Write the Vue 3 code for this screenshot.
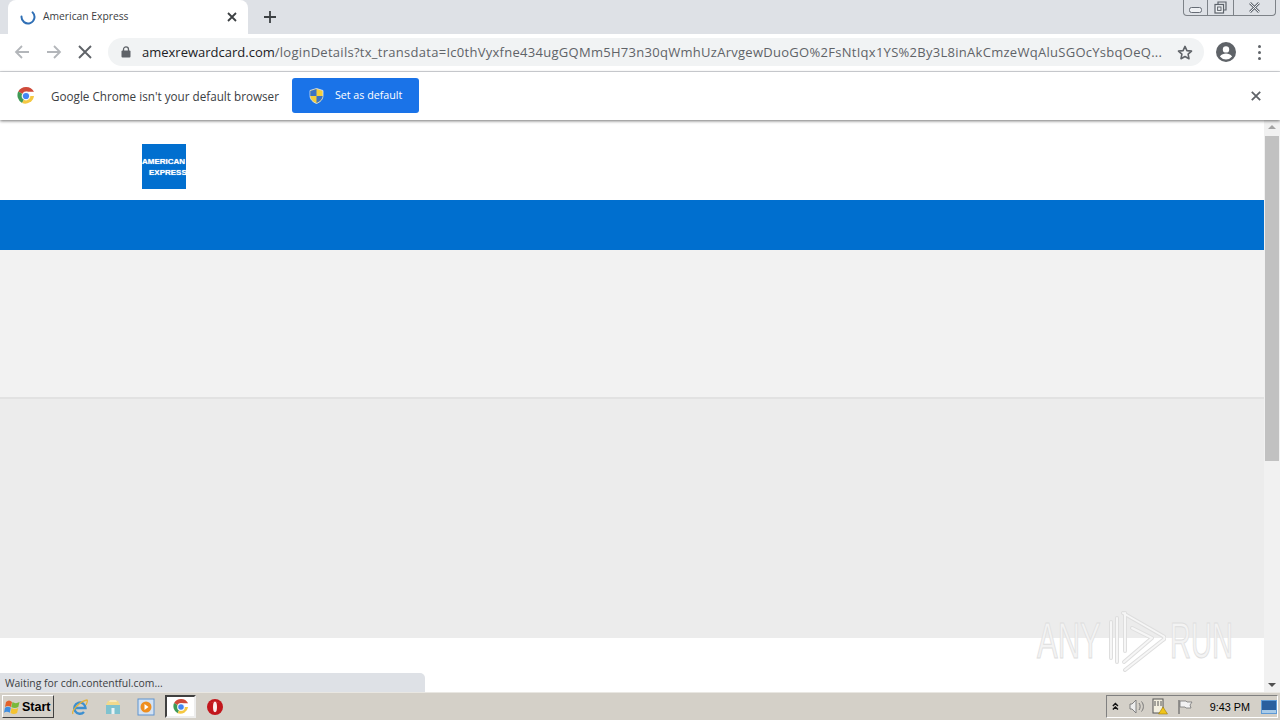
<script setup>
const url = 'amexrewardcard.com'
const path = '/loginDetails?tx_transdata=Ic0thVyxfne434ugGQMm5H73n30qWmhUzArvgewDuoGO%2FsNtIqx1YS%2By3L8inAkCmzeWqAluSGOcYsbqOeQ...'
</script>

<template>
  <div class="screen">
    <header class="tabstrip">
      <div class="tab">
        <svg class="spinner" width="16" height="16" viewBox="0 0 16 16"><path d="M12.600 3.400A6.500 6.500 0 1 1 1.500 7.500" fill="none" stroke="#2f6fb5" stroke-width="2" stroke-linecap="round"/></svg>
        <span class="tab-title">American Express</span>
        <svg class="tab-close" width="10" height="10" viewBox="0 0 10 10"><path d="M1 1l8 8M9 1l-8 8" stroke="#3c4043" stroke-width="1.800"/></svg>
      </div>
      <svg class="new-tab" width="12" height="12" viewBox="0 0 12 12"><path d="M6 0v12M0 6h12" stroke="#3c4043" stroke-width="1.800"/></svg>
      <div class="win-controls">
        <div class="win-btn min"><svg width="13" height="6" viewBox="0 0 13 6"><rect x=".5" y=".5" width="12" height="5" rx="2" fill="#eef0f3" stroke="#666c75"/></svg></div>
        <div class="win-btn mid"><svg width="13" height="13" viewBox="0 0 13 13"><path d="M4 3V1h8v8h-2" fill="none" stroke="#5d636b" stroke-width="1.200"/><rect x="1" y="3.500" width="8.500" height="8.500" fill="#eef0f3" stroke="#5d636b" stroke-width="1.200"/><rect x="3.600" y="6" width="3.400" height="3.400" fill="none" stroke="#5d636b"/></svg></div>
        <div class="win-btn close"><svg width="13" height="11" viewBox="0 0 13 11"><path d="M2 1l9 9M11 1l-9 9" stroke="#666c75" stroke-width="2.600"/><path d="M2 1l9 9M11 1l-9 9" stroke="#eef0f3" stroke-width="1"/></svg></div>
      </div>
    </header>

    <nav class="toolbar">
      <svg class="nav-icon first" width="16" height="16" viewBox="0 0 16 16"><path d="M15 8H2M8 2L2 8l6 6" fill="none" stroke="#b3b6ba" stroke-width="1.800"/></svg>
      <svg class="nav-icon" width="16" height="16" viewBox="0 0 16 16"><path d="M1 8h13M8 2l6 6-6 6" fill="none" stroke="#b3b6ba" stroke-width="1.800"/></svg>
      <svg class="nav-icon" width="14" height="14" viewBox="0 0 14 14"><path d="M1 1l12 12M13 1L1 13" stroke="#5f6368" stroke-width="1.900"/></svg>
      <div class="omnibox">
        <svg class="lock" width="10" height="12" viewBox="0 0 10 12"><path d="M2.500 5V3.400a2.500 2.500 0 0 1 5 0V5" fill="none" stroke="#5f6368" stroke-width="1.300"/><rect x="0.500" y="4.600" width="9" height="7" rx="1" fill="#5f6368"/></svg>
        <span class="url"><b class="domain">{{ url }}</b>{{ path }}</span>
        <svg class="star" width="16" height="15" viewBox="0 0 16 15"><path d="M8 1.400l1.900 4.200 4.600.5-3.400 3.100.9 4.500L8 11.500l-4 2.200.9-4.500L1.500 6.100l4.600-.5z" fill="none" stroke="#5f6368" stroke-width="1.600" stroke-linejoin="round"/></svg>
      </div>
      <svg class="avatar" width="20" height="20" viewBox="0 0 20 20"><circle cx="10" cy="10" r="10" fill="#5f6368"/><circle cx="10" cy="7.400" r="3.200" fill="#fff"/><path d="M3.900 14.600c1.400-2.200 3.900-3 6.100-3s4.700.8 6.100 3a7.800 7.800 0 0 1-12.200 0z" fill="#fff"/></svg>
      <div class="kebab"><i></i><i></i><i></i></div>
    </nav>

    <aside class="infobar">
      <svg class="chrome-logo" width="18" height="18" viewBox="0 0 18 18">
        <path d="M9 9L1.200 4.600A9 9 0 0 1 17 4.800H9z" fill="#cf4a3a"/>
        <path d="M9 9l-3.900 7.100A9 9 0 0 1 1.200 4.600z" fill="#3f9a55"/>
        <path d="M9 9h8a9 9 0 0 1-11.900 7.100z" fill="#f5c842"/>
        <circle cx="9" cy="9" r="4.400" fill="#f4f6f8"/><circle cx="9" cy="9" r="3.100" fill="#4285f4"/>
      </svg>
      <span class="info-text">Google Chrome isn't your default browser</span>
      <button class="default-btn">
        <svg width="15" height="16" viewBox="0 0 15 16"><path d="M7.500.5l6.500 2v5c0 4-3 6.700-6.500 8C4 14.200 1 11.500 1 7.500v-5z" fill="#f4cf3c" stroke="#dfe6f2" stroke-width=".8"/><path d="M7.500 1v7H1.300V3zM7.500 8h6.200c-.3 3.300-3 5.700-6.200 7z" fill="#3b73c4"/></svg>
        <span>Set as default</span>
      </button>
      <svg class="info-close" width="10" height="10" viewBox="0 0 10 10"><path d="M.8.800l8.400 8.400M9.200.800L.8 9.200" stroke="#5f6368" stroke-width="1.800"/></svg>
    </aside>

    <main class="viewport">
      <div class="page">
        <div class="site-head">
          <div class="amex-logo"><span class="l1">AMERICAN</span><span class="l2">EXPRESS</span></div>
        </div>
        <div class="blue-band"></div>
        <div class="grey-one"></div>
        <div class="grey-two"></div>
        <div class="foot"></div>
      </div>
      <div class="scrollbar">
        <svg class="arrow-up" width="16" height="15" viewBox="0 0 16 15"><path d="M4 9l4-4 4 4z" fill="#a3a3a3"/></svg>
        <div class="track"><div class="thumb"></div></div>
        <svg width="16" height="15" viewBox="0 0 16 15"><path d="M4 6l4 4 4-4z" fill="#505050"/></svg>
      </div>
      <div class="status-bubble">Waiting for cdn.contentful.com...</div>
      <div class="watermark">
        <span class="wm-any">ANY</span>
        <svg class="wm-play" width="58" height="66" viewBox="0 0 58 66">
          <g fill="none" stroke-linejoin="round" stroke-linecap="round" stroke="#dedede" stroke-width="4">
            <path d="M3 14v36M9 10v44"/><path d="M15 5l40 23c2 1 2 3 0 4L17 62"/><path d="M17 5v38"/><path d="M24 20l20 10-28 24"/>
          </g>
          <g fill="none" stroke-linejoin="round" stroke-linecap="round" stroke="#f6f6f6" stroke-width="2">
            <path d="M3 14v36M9 10v44"/><path d="M15 5l40 23c2 1 2 3 0 4L17 62"/><path d="M17 5v38"/><path d="M24 20l20 10-28 24"/>
          </g>
        </svg>
        <span class="wm-run">RUN</span>
      </div>
    </main>

    <footer class="taskbar">
      <button class="start">
        <svg width="17" height="16" viewBox="0 0 17 16"><path d="M2 3c2-2 4-2 6 0l-1 5C5 6.500 3 6.500 1 8z" fill="#e2622b"/><path d="M8.500 3c2 1.500 4.500 1.500 7 0l-1.200 5c-2.300 1.300-4.800 1.300-7 0z" fill="#79b93a"/><path d="M1 8.800c2-1.500 4-1.500 5.800 0l-1 5c-2-1.500-4-1.500-5.800 0z" fill="#3f8ee0"/><path d="M7.500 9c2.200 1.300 4.500 1.300 6.700 0l-1.100 5c-2.200 1.300-4.600 1.300-6.600 0z" fill="#f4c330"/></svg>
        <span>Start</span>
      </button>
      <div class="quick">
        <svg width="18" height="18" viewBox="0 0 18 18"><path d="M4 10h10.500A5.600 5.600 0 1 0 13 14" fill="none" stroke="#3c8fd0" stroke-width="2.400"/><path d="M2 16C0 13 9 3 16 2c1 1 0 3-1 5" fill="none" stroke="#e3b23c" stroke-width="1.300"/></svg>
        <svg width="18" height="18" viewBox="0 0 18 18"><path d="M2 7h14v9H2z" fill="#7fc2cf"/><path d="M2 7l2-4h10l2 4z" fill="#f1d98c"/><path d="M5 4l1-2h6l1 2z" fill="#f7e9bd"/><rect x="7.500" y="10" width="3" height="6" fill="#e9f3f5"/></svg>
        <svg width="18" height="18" viewBox="0 0 18 18"><rect x="1" y="1" width="16" height="16" fill="#d3e2f3" stroke="#5f93cf"/><circle cx="9" cy="9" r="5.500" fill="#ee8e1f"/><path d="M7.500 6l4 3-4 3z" fill="#fff"/></svg>
      </div>
      <div class="task-active">
        <svg width="16" height="16" viewBox="0 0 18 18">
          <path d="M9 9L1.200 4.600A9 9 0 0 1 17 4.800H9z" fill="#cf4a3a"/>
          <path d="M9 9l-3.900 7.100A9 9 0 0 1 1.200 4.600z" fill="#3f9a55"/>
          <path d="M9 9h8a9 9 0 0 1-11.900 7.100z" fill="#f5c842"/>
          <circle cx="9" cy="9" r="4.400" fill="#f4f6f8"/><circle cx="9" cy="9" r="3.100" fill="#4285f4"/>
        </svg>
      </div>
      <svg class="opera" width="16" height="16" viewBox="0 0 16 16"><circle cx="8" cy="8" r="8" fill="#c2161c"/><path d="M3 4.500A8 8 0 0 1 13 4.500c-2-2-8-2-10 0z" fill="#e2676a"/><ellipse cx="8" cy="8" rx="2" ry="5.200" fill="#fbeeee"/></svg>
      <div class="tray">
        <svg width="8" height="9" viewBox="0 0 8 9"><path d="M1 4l3-3 3 3M1 8l3-3 3 3" fill="none" stroke="#111" stroke-width="1.700"/></svg>
        <svg class="t-sound" width="16" height="15" viewBox="0 0 16 15"><path d="M1 5h2l4-4v13l-4-4H1z" fill="#ededed" stroke="#777" stroke-width=".9"/><path d="M10 4c1.500 2 1.500 5 0 7M12.500 2.500c2.500 3 2.500 7 0 10" fill="none" stroke="#777"/></svg>
        <svg class="t-net" width="17" height="17" viewBox="0 0 17 17"><rect x="1" y="1" width="10" height="14" fill="#f3efdf" stroke="#555"/><path d="M3 3v5M6 3v5M9 3v5" stroke="#555"/><path d="M11 9l4.500 7h-9z" fill="#f0c419" stroke="#9b7a0a" stroke-width=".6"/></svg>
        <svg class="t-flag" width="16" height="16" viewBox="0 0 16 16"><path d="M2 1v14" stroke="#666" stroke-width="1.200"/><path d="M3 2h6l1 1h5l-2 3 1 3H9L8 8H3z" fill="#f2f2f2" stroke="#777" stroke-width=".8"/></svg>
        <span class="clock">9:43 PM</span>
        <svg class="t-desk" width="16" height="14" viewBox="0 0 16 14"><rect width="16" height="14" fill="#5d9ad6"/><rect x="1" y="1" width="14" height="9" fill="#2a5f9e"/><rect x="1" y="10" width="14" height="3" fill="#a9cbe8"/></svg>
      </div>
    </footer>
  </div>
</template>

<style scoped>
.screen {
  width: 1280px;
  height: 720px;
  display: flex;
  flex-direction: column;
  overflow: hidden;
  font-family: "Open Sans", "Liberation Sans", sans-serif;
  color: #3c4043;
  background: #fff;
}

.tabstrip {
  height: 34px;
  flex: none;
  background: #dee1e6;
  display: flex;
  align-items: flex-end;
  padding-left: 8px;
}
.tab {
  width: 240px;
  height: 34px;
  background: #fff;
  border-radius: 8px 8px 0 0;
  display: flex;
  align-items: center;
  padding: 0 11px 0 12px;
  box-sizing: border-box;
}
.tab-title { margin-left: 7px; padding-bottom: 2px; font-size: 10.300px; flex: 1; color: #3c4043; }
.new-tab { margin: 0 0 11px 16px; }
.win-controls {
  margin-left: auto;
  margin-right: 4px;
  align-self: flex-start;
  width: 93px;
  height: 16px;
  box-sizing: border-box;
  display: flex;
  border: 1px solid #7d8288;
  border-top: none;
  border-radius: 0 0 4px 4px;
}
.win-btn { display: flex; align-items: center; justify-content: center; }
.win-btn.min { width: 24px; padding-top: 5px; box-sizing: border-box; border-right: 1px solid #7d8288; }
.win-btn.mid { width: 25px; border-right: 1px solid #7d8288; }
.win-btn.close { flex: 1; }

.toolbar {
  height: 38px;
  flex: none;
  box-sizing: border-box;
  border-bottom: 1px solid #dadce0;
  display: flex;
  align-items: center;
  padding: 0 0 1px 14px;
  background: #fff;
}
.nav-icon { margin-right: 16px; }
.omnibox {
  width: 1096px;
  height: 28px;
  background: #f1f3f4;
  border-radius: 14px;
  display: flex;
  align-items: center;
  padding-left: 13px;
  box-sizing: border-box;
  flex: none;
}
.lock { flex: none; }
.url {
  margin-left: 11px;
  padding-bottom: 1px;
  width: 1024px;
  flex: none;
  font-size: 13px;
  letter-spacing: .28px;
  color: #5f6368;
  white-space: nowrap;
  overflow: hidden;
}
.domain { font-weight: 400; color: #202124; letter-spacing: 0; }
.star { margin-left: 11px; flex: none; }
.avatar { margin-left: 12px; flex: none; }
.kebab { margin-left: 22px; display: flex; flex-direction: column; gap: 3px; }
.kebab i { width: 3px; height: 3px; border-radius: 50%; background: #5f6368; display: block; }

.infobar {
  height: 48px;
  flex: none;
  box-sizing: border-box;
  display: flex;
  align-items: center;
  padding: 0 0 1px 17px;
  background: #fff;
  box-shadow: 0 1px 3px rgba(0, 0, 0, .55);
  position: relative;
  z-index: 2;
}
.info-text { margin-left: 16px; font-size: 11.700px; color: #3c4043; white-space: nowrap; }
.default-btn {
  margin-left: 13px;
  width: 127px;
  height: 35px;
  border: none;
  border-radius: 3px;
  background: #1a73e8;
  color: #fff;
  display: flex;
  align-items: center;
  padding: 0 0 0 17px;
  font: inherit;
  font-size: 10.700px;
}
.default-btn span { margin-left: 11px; padding-bottom: 2px; }
.info-close { margin-left: auto; margin-right: 19px; }

.viewport {
  flex: 1;
  min-height: 0;
  display: flex;
  position: relative;
}
.page { flex: 1; display: flex; flex-direction: column; }
.site-head {
  height: 80px;
  padding: 24px 0 0 142px;
  box-sizing: border-box;
  flex: none;
}
.amex-logo {
  width: 44px;
  height: 45px;
  background: #016fcf;
  display: flex;
  flex-direction: column;
  justify-content: center;
  gap: 2px;
  color: #fff;
  font-family: "Liberation Sans", sans-serif;
  font-weight: 700;
  font-size: 8px;
  line-height: 9px;
  overflow: hidden;
  text-shadow: 0 0 1px rgba(255, 255, 255, .7);
}
.amex-logo .l2 { padding-left: 7px; }
.blue-band { height: 50px; background: #006fcf; flex: none; }
.grey-one { height: 147px; background: #f2f2f2; flex: none; border-bottom: 2px solid #e2e2e2; }
.grey-two { height: 239px; background: #ececec; flex: none; }
.foot { flex: 1; background: #fff; }

.scrollbar {
  width: 16px;
  flex: none;
  background: #f1f1f1;
  display: flex;
  flex-direction: column;
}
.arrow-up { margin-bottom: 1px; }
.track { flex: 1; padding: 0 1px; box-sizing: border-box; }
.thumb { height: 325px; background: #c1c1c1; }

.status-bubble {
  position: absolute;
  left: 0;
  bottom: 0;
  width: 425px;
  height: 19px;
  box-sizing: border-box;
  padding: 2px 0 0 5px;
  background: #dee1e6;
  border-top-right-radius: 5px;
  font-size: 10.400px;
  line-height: 16px;
  color: #3c4043;
}
.watermark {
  position: absolute;
  left: 1037px;
  top: 488px;
  width: 200px;
  height: 66px;
  display: flex;
  align-items: center;
  color: #f3f3f3;
  font-family: "Liberation Sans", sans-serif;
  font-size: 50px;
  line-height: 62px;
  -webkit-text-stroke: 1px #dedede;
}
.watermark span { display: inline-block; transform-origin: left center; flex: none; }
.wm-any { width: 71px; transform: scaleX(.62); }
.wm-play { flex: none; }
.wm-run { width: 62px; margin-left: 4px; transform: scaleX(.58); }

.taskbar {
  height: 28px;
  flex: none;
  background: #d4d0c8;
  border-top: 1px solid #e9e7e2;
  box-sizing: border-box;
  display: flex;
  align-items: center;
  padding-left: 2px;
  font-family: "Liberation Sans", sans-serif;
}
.start {
  width: 52px;
  height: 23px;
  padding: 0 0 0 1px;
  display: flex;
  align-items: center;
  gap: 1px;
  background: #d4d0c8;
  border: 1px solid;
  border-color: #fff #404040 #404040 #fff;
  font-family: "Liberation Sans", sans-serif;
  font-weight: 700;
  font-size: 12.500px;
  color: #000;
  box-sizing: border-box;
}
.quick { margin-left: 17px; display: flex; gap: 15px; }
.task-active {
  margin-left: 10px;
  width: 31px;
  height: 23px;
  box-sizing: border-box;
  background: #fff;
  border: 2px solid;
  border-color: #404040 #eee #eee #404040;
  display: flex;
  align-items: center;
  justify-content: center;
}
.opera { margin-left: 11px; }
.tray {
  margin-left: auto;
  margin-right: 2px;
  width: 172px;
  height: 23px;
  box-sizing: border-box;
  border: 1px solid;
  border-color: #808080 #fff #fff #808080;
  display: flex;
  align-items: center;
  padding-left: 5px;
}
.t-sound { margin-left: 10px; flex: none; }
.t-net { margin-left: 7px; flex: none; }
.t-flag { margin-left: 8px; flex: none; }
.clock { margin-left: 17px; font-size: 10.800px; color: #000; white-space: nowrap; flex: none; }
.t-desk { margin-left: 11px; flex: none; }
</style>
